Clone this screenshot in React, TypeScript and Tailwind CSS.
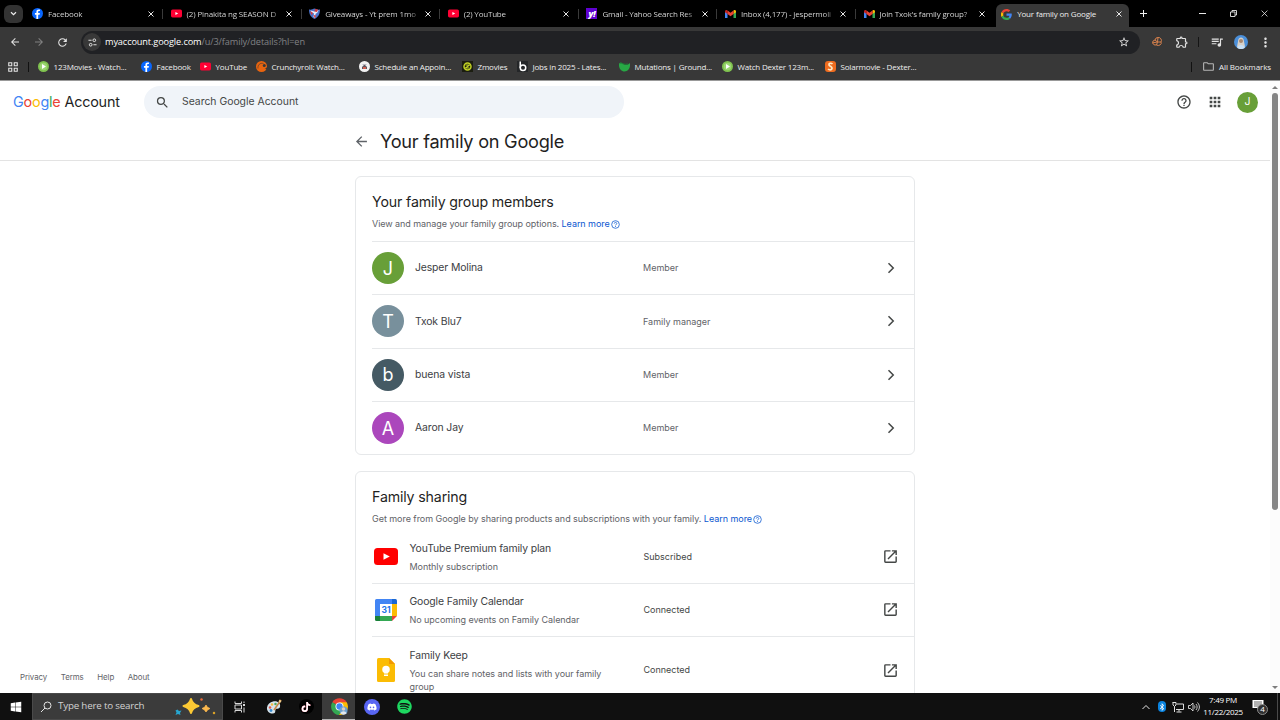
import type {ReactNode} from 'react';

import {FaBluetoothB, FaDiscord, FaSpotify, FaTiktok, FaWindows} from 'react-icons/fa';
import {
  MdApps,
  MdArrowBack,
  MdArrowForward,
  MdHelpOutline,
  MdMoreVert,
  MdOpenInNew,
  MdOutlineExtension,
  MdOutlineFolder,
  MdQueueMusic,
  MdRefresh,
  MdSearch,
  MdStarBorder,
} from 'react-icons/md';

/**
 * Favicons
 */
const FacebookIcon = () => (
  <svg className="size-[11px] shrink-0" viewBox="0 0 24 24">
    <circle cx="12" cy="12" fill="#0866ff" r="12" />
    <path d="M13.4 24v-9.2h3.2l.6-3.8h-3.8V8.9c0-1.2.6-2.1 2.1-2.1h1.8V3.5c-.5-.1-1.6-.2-2.7-.2-3 0-5 1.8-5 5.1V11H6.4v3.8h3.2V24z" fill="#fff" />
  </svg>
);

const YouTubeIcon = ({className = 'h-[9px] w-[11px]', color = '#ff0033'}: {className?: string; color?: string}) => (
  <svg className={`shrink-0 ${className}`} viewBox="0 0 24 17">
    <rect fill={color} height="17" rx="3.5" width="24" />
    <path d="M9.5 5.2v6.6l6.3-3.3z" fill="#fff" />
  </svg>
);

const ShieldIcon = () => (
  <svg className="size-[11px] shrink-0" viewBox="0 0 22 22">
    <path d="M0 3c4 1 8-1 11-2 3 1 7 3 11 2 0 9-3 15-11 19C3 18 0 12 0 3z" fill="#4a72c9" />
    <path d="M3 5l8 2 8-3-2 5-4 3-1 8-3-2 1-7-5-3z" fill="#e9eefb" />
    <path d="M12 2l6 1-2 5-5-1zM2 6l6 4-3 4zM9 14l5 1-2 6z" fill="#d93a3a" />
  </svg>
);

const YahooIcon = () => (
  <span className="flex size-[11px] shrink-0 items-center justify-center bg-[#5f01d1] text-[9px] leading-none font-black tracking-[-0.5px] text-white italic">
    y!
  </span>
);

const GmailIcon = () => (
  <svg className="h-[8px] w-[11px] shrink-0" viewBox="0 0 22 16">
    <path d="M0 2v14h5V6z" fill="#4285f4" />
    <path d="M22 2v14h-5V6z" fill="#34a853" />
    <path d="M0 2.5C0 0 3-.8 5 .8V8L0 4.5z" fill="#c5221f" />
    <path d="M22 2.5C22 0 19-.8 17 .8V8l5-3.5z" fill="#fbbc04" />
    <path d="M5 .8l6 4.5 6-4.5V8l-6 4.5L5 8z" fill="#ea4335" />
  </svg>
);

const GoogleIcon = () => (
  <svg className="size-[11px] shrink-0" viewBox="0 0 48 48">
    <path d="M24 9.5c3.5 0 6.7 1.2 9.2 3.6l6.9-6.9C35.9 2.4 30.5 0 24 0 14.6 0 6.5 5.4 2.6 13.2l8 6.2C12.4 13.7 17.7 9.5 24 9.5z" fill="#ea4335" />
    <path d="M47 24.5c0-1.6-.2-3.1-.4-4.5H24v9h12.9c-.6 3-2.3 5.5-4.8 7.2l7.7 6C44.4 38 47 31.8 47 24.5z" fill="#4285f4" />
    <path d="M10.5 28.6a14.5 14.5 0 0 1 0-9.2l-8-6.2a24 24 0 0 0 0 21.6z" fill="#fbbc05" />
    <path d="M24 48c6.5 0 11.9-2.1 15.9-5.8l-7.7-6c-2.2 1.5-4.9 2.3-8.2 2.3-6.3 0-11.6-4.2-13.5-9.9l-8 6.2C6.5 42.6 14.6 48 24 48z" fill="#34a853" />
  </svg>
);

const PlayIcon = () => (
  <svg className="size-[11px] shrink-0" viewBox="0 0 22 22">
    <circle cx="11" cy="11" fill="#7fc24f" r="11" />
    <circle cx="11" cy="11" fill="#9bd672" r="7.5" />
    <path d="M8 6v10l8-5z" fill="#fff" />
  </svg>
);

const CrunchyrollIcon = () => (
  <svg className="size-[11px] shrink-0" viewBox="0 0 22 22">
    <circle cx="11" cy="11" fill="#e8640f" r="11" />
    <path d="M4 15C3 8 8 3 15 5" fill="none" stroke="#383838" strokeWidth="1.2" />
    <circle cx="16.5" cy="9" fill="#383838" r="3" />
    <path d="M22 12c-1 2-3 3-5 3l5 2z" fill="#383838" />
  </svg>
);

const ScheduleIcon = () => (
  <svg className="size-[11px] shrink-0" viewBox="0 0 22 22">
    <circle cx="11" cy="11" fill="#f1f1f1" r="11" />
    <path d="M6 12l5-5 5 5v4H6z" fill="#5b5560" />
    <path d="M8 12h6v4H8z" fill="#d0604f" />
    <path d="M7 6h8v2H7z" fill="#b9b9c0" />
  </svg>
);

const ZmoviesIcon = () => (
  <svg className="size-[11px] shrink-0" viewBox="0 0 22 22">
    <rect fill="#1b1d10" height="22" width="22" />
    <circle cx="11" cy="11" fill="none" r="7" stroke="#c3d325" strokeWidth="3" />
    <path d="M7 8h8l-8 6h8" fill="none" stroke="#c3d325" strokeWidth="2.2" />
  </svg>
);

const JobsIcon = () => (
  <svg className="size-[11px] shrink-0" viewBox="0 0 22 22">
    <rect fill="#242628" height="22" width="22" />
    <circle cx="12" cy="13.5" fill="none" r="5.5" stroke="#fff" strokeWidth="3" />
    <rect fill="#fff" height="13" width="3" x="5" y="1" />
  </svg>
);

const MutationsIcon = () => (
  <svg className="size-[11px] shrink-0" viewBox="0 0 22 22">
    <path d="M0 6C1 2 6 3 9 6c4 3 9 2 13-2 1 10-3 17-11 17C4 21-1 14 0 6z" fill="#28a745" />
    <path d="M2 4c4 0 8 4 16 2" fill="none" stroke="#1a7a35" strokeWidth="2" />
  </svg>
);

const SolarIcon = () => (
  <svg className="size-[11px] shrink-0" viewBox="0 0 22 22">
    <rect fill="#ef6c1f" height="22" rx="6" width="22" />
    <path d="M15 6c-3-3-8-1-7 2s7 3 6 7-6 3-8 1" fill="none" stroke="#ffe9c4" strokeWidth="3.4" />
  </svg>
);

const CloseIcon = ({className = 'size-[6px]', strokeWidth = 1.9}: {className?: string; strokeWidth?: number}) => (
  <svg className={`shrink-0 ${className}`} viewBox="0 0 12 12">
    <path d="M1 1l10 10M11 1L1 11" stroke="#f1f1f1" strokeWidth={strokeWidth} />
  </svg>
);

/**
 * Browser tabs
 */
type BrowserTab = {
  icon: ReactNode;
  label: string;
  tracking: string;
};

const TABS: BrowserTab[] = [
  {icon: <FacebookIcon />, label: 'Facebook', tracking: 'tracking-[-0.16px]'},
  {icon: <YouTubeIcon />, label: '(2) Pinakita ng SEASON D', tracking: 'tracking-[-0.14px]'},
  {icon: <ShieldIcon />, label: 'Giveaways - Yt prem 1mo', tracking: 'tracking-[-0.16px]'},
  {icon: <YouTubeIcon />, label: '(2) YouTube', tracking: 'tracking-[-0.2px]'},
  {icon: <YahooIcon />, label: 'Gmail - Yahoo Search Res', tracking: 'tracking-[-0.2px]'},
  {icon: <GmailIcon />, label: 'Inbox (4,177) - jespermoli', tracking: 'tracking-[-0.16px]'},
  {icon: <GmailIcon />, label: "Join Txok's family group?", tracking: 'tracking-[-0.16px]'},
];

const TabStrip = () => (
  <div className="flex h-[27px] items-center bg-black pl-1">
    <div className="flex h-[18px] w-[19px] items-center justify-center rounded-[6px] bg-[#333]">
      <svg className="size-[7px]" viewBox="0 0 14 14">
        <path d="M2 4.5l5 5 5-5" fill="none" stroke="#eee" strokeWidth="2.4" />
      </svg>
    </div>
    <div className="flex pl-[2px]">
      {TABS.map(({icon, label, tracking}, index) => (
        <div className="flex w-[138.6px] items-center pl-[7px]" key={label}>
          {icon}
          <div
            className={`ml-[4px] w-[94px] bg-gradient-to-r from-[#e6e6e6] from-90% to-[#333] bg-clip-text pl-px text-[8px] leading-[14px] whitespace-nowrap text-transparent ${tracking}`}
          >
            {label}
          </div>
          <CloseIcon className="ml-[6.5px] size-[6px]" />
          {index < TABS.length - 1 && <span className="ml-[8.5px] h-[10px] w-px bg-[#3a3a3a]" />}
        </div>
      ))}
    </div>
    <div className="ml-[1px] flex h-[23px] w-[133px] items-center self-end rounded-t-[6px] bg-[#383838] pb-[3px] pl-[5px]">
      <GoogleIcon />
      <span className="ml-[5px] w-[92px] text-[8px] tracking-[-0.16px] whitespace-nowrap text-[#eee]">
        Your family on Google
      </span>
      <CloseIcon className="ml-[7px] size-[6px]" />
    </div>
    <svg className="ml-[11px] size-[7px]" viewBox="0 0 14 14">
      <path d="M7 0v14M0 7h14" stroke="#f1f1f1" strokeWidth="2" />
    </svg>
    <div className="ml-auto flex items-center gap-[24px] pr-[12px]">
      <span className="h-px w-[7px] bg-[#e8e8e8]" />
      <svg className="size-[7px]" fill="none" stroke="#e8e8e8" strokeWidth="1.8" viewBox="0 0 14 14">
        <path d="M1 4h9v9H1zM4 4V1h9v9h-3" />
      </svg>
      <CloseIcon className="size-[7px]" strokeWidth={1.3} />
    </div>
  </div>
);

const Toolbar = () => (
  <div className="flex h-[31px] items-center pb-px text-[#e3e3e3]">
    <MdArrowBack className="ml-[9px] size-[12px]" />
    <MdArrowForward className="ml-[12px] size-[12px] text-[#808080]" />
    <MdRefresh className="ml-[11px] size-[13px]" />
    <div className="ml-[12px] flex h-[23px] w-[1059px] items-center rounded-full bg-[#202124] pr-[10px] pl-[2px]">
      <div className="flex size-[18px] items-center justify-center rounded-full bg-[#383838]">
        <svg className="size-[9px]" fill="none" stroke="#e3e3e3" strokeWidth="2.2" viewBox="0 0 20 20">
          <path d="M1 5h7M12 15h7" />
          <circle cx="14" cy="5" r="3" />
          <circle cx="6" cy="15" r="3" />
        </svg>
      </div>
      <span className="ml-[4px] flex-1 text-[9.2px] tracking-[-0.12px] text-[#808285]">
        <span className="text-white">myaccount.google.com</span>/u/3/family/details?hl=en
      </span>
      <MdStarBorder className="size-[12px]" />
    </div>
    <svg className="ml-[11px] size-[12px]" fill="none" stroke="#d9824d" strokeWidth="2" viewBox="0 0 24 24">
      <path d="M14 3a6 6 0 0 1 6 9 6 5 0 0 1-9 6 6 5 0 1 1-3-10 6 6 0 0 1 6-5z" />
      <path d="M8 8l5 4-2 6M13 12l7 0M14 3l-1 9M3 14l9-2" />
    </svg>
    <MdOutlineExtension className="ml-[12px] size-[14px]" />
    <span className="ml-[9px] h-[10px] w-px bg-[#151515]" />
    <MdQueueMusic className="ml-[11px] size-[14px]" />
    <svg className="ml-[10px] size-[14px]" viewBox="0 0 28 28">
      <circle cx="14" cy="14" fill="#4b8fd9" r="14" />
      <path d="M8 13c0-11 12-11 12 0l2 10-8 5-8-5z" fill="#d5d0ca" />
      <circle cx="14" cy="12" fill="#a8876f" r="4" />
      <path d="M6 25c2-7 14-7 16 0-4 4-12 4-16 0z" fill="#c8dff5" />
    </svg>
    <MdMoreVert className="ml-[10px] size-[15px]" />
  </div>
);

/**
 * Bookmarks bar
 */
const BOOKMARKS = [
  {icon: <PlayIcon />, label: '123Movies - Watch...', width: 'w-[103px]'},
  {icon: <FacebookIcon />, label: 'Facebook', width: 'w-[59px]'},
  {icon: <YouTubeIcon />, label: 'YouTube', width: 'w-[56px]'},
  {icon: <CrunchyrollIcon />, label: 'Crunchyroll: Watch...', width: 'w-[103px]'},
  {icon: <ScheduleIcon />, label: 'Schedule an Appoin...', width: 'w-[103px]'},
  {icon: <ZmoviesIcon />, label: 'Zmovies', width: 'w-[55px]'},
  {icon: <JobsIcon />, label: 'Jobs in 2025 - Lates...', width: 'w-[102px]'},
  {icon: <MutationsIcon />, label: 'Mutations | Ground...', width: 'w-[103px]'},
  {icon: <PlayIcon />, label: 'Watch Dexter 123m...', width: 'w-[103px]'},
  {icon: <SolarIcon />, label: 'Solarmovie - Dexter...', width: 'w-[100px]'},
];

const BookmarksBar = () => (
  <div className="flex h-[22px] items-center pb-[5px] text-[8px] tracking-[-0.18px] whitespace-nowrap text-[#eee]">
    <svg className="ml-[8px] size-[10px]" fill="none" stroke="#e3e3e3" strokeWidth="2.2" viewBox="0 0 20 20">
      <path d="M1.5 1.5h6v6h-6zM12.5 1.5h6v6h-6zM1.5 12.5h6v6h-6zM12.5 12.5h6v6h-6z" />
    </svg>
    <span className="ml-[10px] h-[10px] w-px bg-[#111]" />
    <div className="ml-[9px] flex">
      {BOOKMARKS.map(({icon, label, width}) => (
        <div className={`flex items-center gap-[4.5px] ${width}`} key={label}>
          {icon}
          <span>{label}</span>
        </div>
      ))}
    </div>
    <span className="ml-auto h-[10px] w-px bg-[#111]" />
    <MdOutlineFolder className="ml-[10px] size-[13px] text-[#b5b5b5]" />
    <span className="mr-[10px] ml-[4px] w-[51px] tracking-[-0.1px]">All Bookmarks</span>
  </div>
);

/**
 * Google Account page
 */
type AvatarProps = {
  className: string;
  letter: string;
};

const Avatar = ({className, letter}: AvatarProps) => (
  <div className={`flex shrink-0 items-center justify-center rounded-full text-white ${className}`}>{letter}</div>
);

const Wordmark = () => (
  <div className="w-[131px] text-[14.4px] tracking-[-0.2px] whitespace-nowrap text-[#1f1f1f]">
    <span className="text-[#4285f4]">G</span>
    <span className="text-[#ea4335]">o</span>
    <span className="text-[#fbbc04]">o</span>
    <span className="text-[#4285f4]">g</span>
    <span className="text-[#34a853]">l</span>
    <span className="text-[#ea4335]">e</span> Account
  </div>
);

const PageHeader = () => (
  <header className="h-[80px] border-b border-[#e3e3e3]">
    <div className="flex h-[42px] items-center pl-[13px]">
      <Wordmark />
      <div className="flex h-[32px] w-[480px] items-center rounded-full bg-[#f0f4f9] pl-[11px]">
        <MdSearch className="size-[15px] text-[#444746]" />
        <span className="ml-[12px] text-[10.4px] text-[#444746]">Search Google Account</span>
      </div>
      <MdHelpOutline className="ml-auto size-[16px] text-[#444746]" />
      <MdApps className="ml-[15px] size-[16px] text-[#444746]" />
      <Avatar className="mr-[12px] ml-[14px] size-[21px] bg-[#689f38] text-[10.5px]" letter="J" />
    </div>
    <div className="flex h-[37px] items-center pl-[355px]">
      <svg className="size-[13px]" fill="none" stroke="#5f6368" strokeWidth="2.4" viewBox="0 0 24 24">
        <path d="M22 12H4M12.5 3L3.5 12l9 9" />
      </svg>
      <h1 className="ml-[12px] text-[18.2px] tracking-[-0.27px] text-[#1f1f1f]">Your family on Google</h1>
    </div>
  </header>
);

const LearnMore = () => (
  <a className="inline-flex items-center gap-[1px] text-[#0b57d0]">
    Learn more
    <svg className="size-[9px]" fill="none" stroke="#0b57d0" strokeWidth="1.7" viewBox="0 0 20 20">
      <circle cx="10" cy="10" r="8.5" />
      <path d="M7.2 8c0-3.5 5.6-3.5 5.6 0 0 2-2.8 2-2.8 4M10 13.5v2" />
    </svg>
  </a>
);

const MEMBERS = [
  {color: 'bg-[#689f38]', name: 'Jesper Molina', role: 'Member'},
  {color: 'bg-[#78909c]', name: 'Txok Blu7', role: 'Family manager'},
  {color: 'bg-[#455a64]', name: 'buena vista', role: 'Member'},
  {color: 'bg-[#ab47bc]', name: 'Aaron Jay', role: 'Member'},
];

const MembersCard = () => (
  <section className="h-[279px] rounded-[6px] border border-[#e6e8ea] pl-[16px]">
    <div className="h-[64px] pt-[15px]">
      <h2 className="text-[14.2px] leading-[20px] tracking-[-0.15px] text-[#1f1f1f]">Your family group members</h2>
      <p className="mt-[5px] text-[9px] leading-[14px] tracking-[-0.06px] text-[#5f6368]">
        View and manage your family group options. <LearnMore />
      </p>
    </div>
    {MEMBERS.map(({color, name, role}) => (
      <div className="flex h-[53.3px] items-center border-t border-[#e6e8ea]" key={name}>
        <Avatar className={`size-[32px] text-[18px] ${color}`} letter={name[0]} />
        <span className="ml-[11px] w-[228px] text-[10.4px] tracking-[-0.12px] text-[#3c4043]">{name}</span>
        <span className="flex-1 text-[9px] text-[#5f6368]">{role}</span>
        <svg className="mr-[17px] size-[12px]" fill="none" stroke="#444746" strokeWidth="3" viewBox="0 0 24 24">
          <path d="M7 2.5l9.5 9.5L7 21.5" />
        </svg>
      </div>
    ))}
  </section>
);

const CalendarIcon = () => (
  <svg className="size-[22px]" viewBox="0 0 44 44">
    <path d="M3 0h31v10H10v24H0V3a3 3 0 0 1 3-3z" fill="#4285f4" />
    <path d="M34 0h7a3 3 0 0 1 3 3v7H34z" fill="#1967d2" />
    <path d="M34 10h10v24H34z" fill="#fbbc04" />
    <path d="M10 34h24v10H10z" fill="#34a853" />
    <path d="M0 34h10v10H3a3 3 0 0 1-3-3z" fill="#188038" />
    <path d="M34 34h10L34 44z" fill="#ea4335" />
    <path d="M10 10h24v24H10z" fill="#fff" />
    <text fill="#1a73e8" fontSize="17" fontWeight="700" textAnchor="middle" x="22" y="28">
      31
    </text>
  </svg>
);

const KeepIcon = () => (
  <svg className="h-[24px] w-[18px]" viewBox="0 0 36 48">
    <path d="M3 0h21l12 12v33a3 3 0 0 1-3 3H3a3 3 0 0 1-3-3V3a3 3 0 0 1 3-3z" fill="#fbbc04" />
    <path d="M24 0l12 12H24z" fill="#f29900" />
    <circle cx="18" cy="23" fill="#fff" r="7.5" />
    <path d="M14 27h8v4h-8zM14 33h8v3h-8z" fill="#fff" />
  </svg>
);

const SERVICES = [
  {
    detail: 'Monthly subscription',
    height: 'h-[53.4px]',
    icon: <YouTubeIcon className="h-[17px] w-[24px]" color="#ff0000" />,
    name: 'YouTube Premium family plan',
    status: 'Subscribed',
  },
  {
    detail: 'No upcoming events on Family Calendar',
    height: 'h-[53.3px]',
    icon: <CalendarIcon />,
    name: 'Google Family Calendar',
    status: 'Connected',
  },
  {
    detail: 'You can share notes and lists with your family group',
    height: 'h-[67px]',
    icon: <KeepIcon />,
    name: 'Family Keep',
    status: 'Connected',
  },
];

const SharingCard = () => (
  <section className="mt-[16px] rounded-t-[6px] border border-[#e6e8ea] pl-[16px]">
    <div className="h-[58.4px] pt-[15px]">
      <h2 className="text-[14.2px] leading-[20px] tracking-[-0.15px] text-[#1f1f1f]">Family sharing</h2>
      <p className="mt-[5px] text-[9px] leading-[14px] tracking-[-0.04px] text-[#5f6368]">
        Get more from Google by sharing products and subscriptions with your family. <LearnMore />
      </p>
    </div>
    {SERVICES.map(({detail, height, icon, name, status}) => (
      <div className={`flex items-center border-b border-[#e6e8ea] ${height}`} key={name}>
        <div className="flex w-[27px] justify-center">{icon}</div>
        <div className="ml-[10.5px] w-[200px]">
          <div className="text-[10.4px] leading-[18px] tracking-[-0.13px] text-[#3c4043]">{name}</div>
          <div className="pt-[2px] text-[9px] leading-[13.5px] tracking-[-0.05px] text-[#5f6368]">{detail}</div>
        </div>
        <span className="ml-[34px] flex-1 text-[9px] text-[#444746]">{status}</span>
        <MdOpenInNew className="mr-[15px] size-[17px] text-[#444746]" />
      </div>
    ))}
  </section>
);

const Scrollbar = () => (
  <div className="flex w-[10px] flex-col items-center bg-[#fcfcfc]">
    <svg className="mt-[5px] h-[3px] w-[6px]" viewBox="0 0 6 3">
      <path d="M0 3l3-3 3 3z" fill="#7d7d7d" />
    </svg>
    <span className="mt-[4px] h-[417px] w-[6px] rounded-full bg-[#858585]" />
    <svg className="mt-auto mb-[4px] h-[3px] w-[6px]" viewBox="0 0 6 3">
      <path d="M0 0l3 3 3-3z" fill="#7d7d7d" />
    </svg>
  </div>
);

const AccountPage = () => (
  <div className="flex h-[612px] overflow-hidden bg-white font-['Inter',sans-serif]">
    <div className="flex min-w-0 flex-1 flex-col">
      <PageHeader />
      <div className="flex min-h-0 flex-1">
        <footer className="flex w-[355px] items-end gap-[13.5px] pb-[10px] pl-[20px] text-[7.9px] leading-[12px] tracking-[-0.06px] text-[#5f6368]">
          <span>Privacy</span>
          <span>Terms</span>
          <span>Help</span>
          <span>About</span>
        </footer>
        <main className="w-[560px] pt-[15px]">
          <MembersCard />
          <SharingCard />
        </main>
      </div>
    </div>
    <Scrollbar />
  </div>
);

/**
 * Windows taskbar
 */
const TASKBAR_CELL = 'flex h-full w-[33px] items-center justify-center';

const Taskbar = () => (
  <div className="flex h-[27px] items-center bg-[#101010] text-white">
    <div className="flex w-[32px] justify-center">
      <FaWindows className="size-[12px]" />
    </div>
    <div className="flex h-full w-[191px] items-center border border-[#4a4a4a] bg-[#3b3b3b] pl-[7px]">
      <svg className="size-[12px]" fill="none" stroke="#e5e5e5" strokeWidth="2" viewBox="0 0 24 24">
        <circle cx="15" cy="9" r="7" />
        <path d="M10 14l-8 8" />
      </svg>
      <span className="ml-[6px] w-[117px] text-[9.8px] tracking-[-0.2px] text-[#d2d2d2]">Type here to search</span>
      <svg className="h-[19px] w-[42px]" viewBox="0 0 84 38">
        <path d="M32 4q3 11 15 14q-12 3-15 14q-3-11-15-14q12-3 15-14z" fill="#fcc934" stroke="#fcc934" strokeLinejoin="round" strokeWidth="4" />
        <path d="M62 16q2 6 8 7q-6 2-8 7q-2-5-8-7q6-1 8-7z" fill="#fdb94e" stroke="#fdb94e" strokeWidth="1.5" />
        <path d="M5 25l3 3 5-1-3 5 1 4-5-2-5 2 2-5-2-4z" fill="#27a5cf" />
        <circle cx="53" cy="5" fill="#ef6b37" r="2.5" />
        <circle cx="78" cy="32" fill="#d9a128" r="2.5" />
      </svg>
    </div>
    <div className={TASKBAR_CELL}>
      <svg className="size-[12px]" fill="none" stroke="#d8d8d8" strokeWidth="2" viewBox="0 0 24 24">
        <path d="M2 1v4h13V1M2 23v-4h13v4M2 8h13v8H2zM20 1v3M20 13v10" />
        <path d="M18 8h4" strokeWidth="4" />
      </svg>
    </div>
    <div className={TASKBAR_CELL}>
      <svg className="ml-[2px] size-[16px]" viewBox="0 0 32 32">
        <path d="M14 5c9-2 16 4 14 11-2 5-7 2-9 5-1 3 1 7-5 8C7 30 1 24 2 17 3 10 8 6 14 5z" fill="#d5e3ec" />
        <circle cx="8" cy="17" fill="#e2574c" r="2.5" />
        <circle cx="12" cy="11" fill="#f5b83d" r="2.5" />
        <circle cx="19" cy="10" fill="#51a85a" r="2.5" />
        <circle cx="10" cy="23" fill="#3a8ed0" r="2.8" />
        <path d="M30 2L16 22" stroke="#c98643" strokeWidth="3" />
        <path d="M27 1l4 3-3 4-3-3z" fill="#f1cf8c" />
      </svg>
    </div>
    <div className={TASKBAR_CELL}>
      <span className="ml-px flex size-[15px] items-center justify-center rounded-full bg-black">
        <FaTiktok className="size-[10px] drop-shadow-[0.5px_0.5px_0_#fe2c55]" />
      </span>
    </div>
    <div className={`${TASKBAR_CELL} border-b border-[#b5b5b5] bg-[#3b3b3b]`}>
      <svg className="ml-px size-[17px]" viewBox="0 0 34 34">
        <path d="M17 17L2.5 8.5a17 17 0 0 1 29 0z" fill="#ea4335" />
        <path d="M17 17L2.5 8.5A17 17 0 0 0 16 34l8-13z" fill="#34a853" />
        <path d="M17 17l7 4-8 13A17 17 0 0 0 31.5 8.5H17z" fill="#fbbc04" />
        <circle cx="17" cy="17" fill="#fff" r="8" />
        <circle cx="17" cy="17" fill="#4285f4" r="6.3" />
        <circle cx="25" cy="25" fill="#6ba0cf" r="8" />
        <circle cx="25" cy="22" fill="#d9cec4" r="3.5" />
        <path d="M19 31c1-6 11-6 12 0-3 3-9 3-12 0z" fill="#e3e8ed" />
      </svg>
    </div>
    <div className={TASKBAR_CELL}>
      <span className="flex size-[16px] items-center justify-center rounded-full bg-[#5865f2]">
        <FaDiscord className="size-[10px]" />
      </span>
    </div>
    <div className={TASKBAR_CELL}>
      <FaSpotify className="size-[15px] text-[#1ed760]" />
    </div>
    <div className="ml-auto flex h-full items-center">
      <svg className="size-[8px]" fill="none" stroke="#e5e5e5" strokeWidth="2" viewBox="0 0 16 16">
        <path d="M1 12l7-7 7 7" />
      </svg>
      <span className="ml-[8px] flex h-[11px] w-[8px] items-center justify-center rounded-full bg-[#0a84e0]">
        <FaBluetoothB className="size-[8px]" />
      </span>
      <svg className="ml-[6px] size-[12px]" fill="none" stroke="#dedede" strokeWidth="2" viewBox="0 0 24 24">
        <path d="M9 6h14v11H8M5 11v11M14 17v4M9 22h10M1 3h7v5l-3 3-3-3V3" />
      </svg>
      <svg className="ml-[4px] size-[12px]" fill="none" stroke="#dedede" strokeWidth="1.8" viewBox="0 0 24 24">
        <path d="M1 9h4l5-5v16l-5-5H1zM13 9c1 2 1 4 0 6M16 6c3 4 3 8 0 12M19 3c5 6 5 12 0 18" />
      </svg>
      <div className="ml-[2px] w-[42px] pb-px text-center text-[8px] leading-[12px] tracking-[-0.3px] whitespace-nowrap">
        <div>7:49 PM</div>
        <div>11/22/2025</div>
      </div>
      <div className="relative ml-[8px] h-[16px] w-[17px]">
        <svg className="size-[12px]" viewBox="0 0 24 24">
          <path d="M1 2h22v16h-8l-4 5v-5H1z" fill="#fff" />
          <path d="M4 6h16M4 10h16M4 14h10" stroke="#333" strokeWidth="1.5" />
        </svg>
        <span className="absolute top-[5px] left-[5px] flex size-[11px] items-center justify-center rounded-full border border-[#8a8a8a] bg-[#303030] text-[8px] leading-none">
          4
        </span>
      </div>
      <span className="mr-[2px] ml-[8px] h-full w-px bg-[#4a4a4a]" />
    </div>
  </div>
);

export default function App() {
  return (
    <div className="flex h-[720px] w-[1280px] flex-col overflow-hidden bg-[#383838] font-['Open_Sans','Noto_Sans',sans-serif]">
      <TabStrip />
      <Toolbar />
      <BookmarksBar />
      <div className="h-px bg-[#999]" />
      <AccountPage />
      <Taskbar />
    </div>
  );
}
